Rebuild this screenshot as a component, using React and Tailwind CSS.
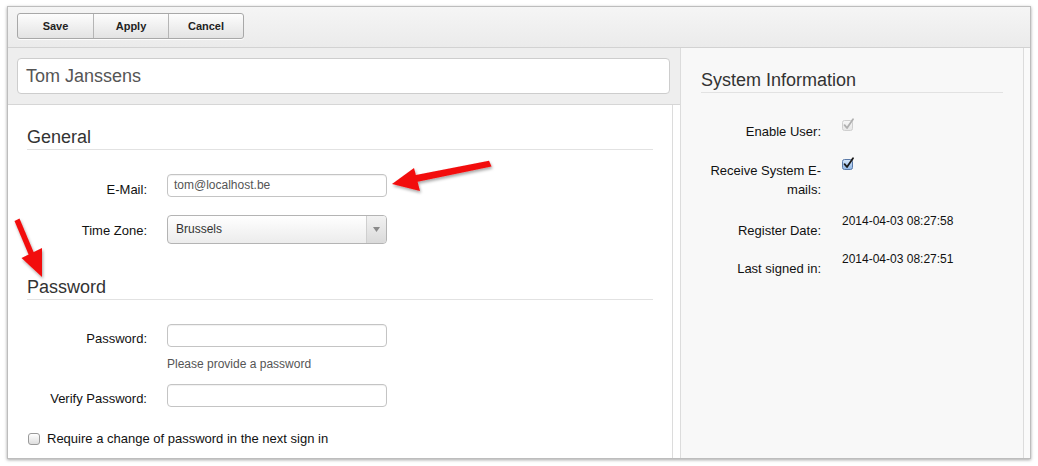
import React from "react";

const font = { fontFamily: '"Liberation Sans", Arial, sans-serif' };

function Check({ variant }) {
  const disabled = variant === "disabled";
  return (
    <svg width="14" height="14" viewBox="0 0 14 14">
      <defs>
        <linearGradient id={"cb-" + variant} x1="0" y1="0" x2="0" y2="1">
          <stop offset="0" stopColor={disabled ? "#f7f7f7" : "#d6e7fa"} />
          <stop offset="1" stopColor={disabled ? "#e6e6e6" : "#8fb6e6"} />
        </linearGradient>
      </defs>
      <rect x="1.5" y="2.5" width="10" height="10" rx="2" fill={"url(#cb-" + variant + ")"} stroke={disabled ? "#cfcfcf" : "#5a7aa8"} />
      <path d="M3.6 7.2 L6 10 L12 1.2" stroke={disabled ? "#b0b0b0" : "#1a1a1a"} strokeWidth="1.8" fill="none" strokeLinecap="round" strokeLinejoin="round" />
    </svg>
  );
}

function Field({ label, children, labelPt = "pt-[8px]" }) {
  return (
    <div className="flex">
      <div className={"w-[120px] text-right text-[13px] leading-[16px] text-[#111] " + labelPt}>{label}</div>
      <div className="ml-[20px]">{children}</div>
    </div>
  );
}

function TextInput({ value }) {
  return (
    <div className="w-[220px] h-[23px] border border-[#c4c4c4] rounded-[4px] bg-white shadow-[inset_0_1px_1px_rgba(0,0,0,0.06)] pl-[6px] text-[12px] leading-[21px] text-[#555]">
      {value}
    </div>
  );
}

function Arrows() {
  return (
    <svg className="absolute left-0 top-0 pointer-events-none" width="1038" height="466">
      <defs>
        <filter id="sh" x="-20%" y="-20%" width="140%" height="140%">
          <feDropShadow dx="1" dy="2" stdDeviation="1.5" floodColor="#000" floodOpacity="0.35" />
        </filter>
      </defs>
      <g filter="url(#sh)" fill="#f20f0f">
        <polygon points="414.5,175.3 489,160.8 491.5,166.4 416.5,182" />
        <polygon points="392,184 414,168 420,191" />
        <polygon points="14.5,221 19.5,218.5 34,253 29,255.5" />
        <polygon points="42,277 21.5,258 42,248" />
      </g>
    </svg>
  );
}

export default function App() {
  return (
    <div className="relative w-[1038px] h-[466px] bg-white pl-[7px] pt-[6px] overflow-hidden" style={font}>
      <div className="w-[1024px] h-[453px] border border-[#bdbdbd] shadow-[0_1px_3px_rgba(0,0,0,0.35)] flex flex-col bg-white">
        {/* toolbar */}
        <div className="h-[41px] shrink-0 border-b border-[#d2d2d2] bg-gradient-to-b from-[#f5f5f5] to-[#ebebeb] pl-[9px] pt-[6px]">
          <div className="inline-flex h-[26px] border border-[#a8a8a8] rounded-[3px] overflow-hidden bg-gradient-to-b from-[#fdfdfd] to-[#e3e3e3] shadow-[0_1px_0_rgba(255,255,255,0.8)]">
            {["Save", "Apply", "Cancel"].map((b, i) => (
              <div
                key={b}
                className={
                  "w-[75px] flex items-center justify-center text-[11px] font-bold text-[#222] " +
                  (i > 0 ? "border-l border-[#b5b5b5]" : "")
                }
              >
                {b}
              </div>
            ))}
          </div>
        </div>
        {/* body */}
        <div className="flex flex-1 min-h-0">
          {/* left column */}
          <div className="w-[672px] flex flex-col">
            <div className="h-[57px] shrink-0 bg-[#eeeeee] border-b border-[#d6d6d6] pl-[9px] pt-[10px]">
              <div className="w-[653px] h-[36px] bg-white border border-[#cdcdcd] rounded-[4px] pl-[8px] text-[18px] leading-[34px] text-[#555]">
                Tom Janssens
              </div>
            </div>
            <div className="flex flex-1">
              <div className="w-[665px] border-r border-[#dcdcdc] bg-white pl-[19px] pr-[19px]">
                <div className="pt-[20px]">
                  <h2 className="text-[18px] leading-[24px] text-[#333] border-b border-[#e2e2e2]">General</h2>
                </div>
                <div className="mt-[24px]">
                  <Field label="E-Mail:">
                    <TextInput value="tom@localhost.be" />
                  </Field>
                </div>
                <div className="mt-[17px]">
                  <Field label="Time Zone:">
                    <div className="w-[220px] h-[29px] border border-[#b4b4b4] rounded-[4px] bg-gradient-to-b from-[#ffffff] to-[#ececec] flex overflow-hidden">
                      <div className="flex-1 pl-[8px] text-[12px] leading-[27px] text-[#333]">Brussels</div>
                      <div className="w-[20px] border-l border-[#cfcfcf] bg-gradient-to-b from-[#f2f2f2] to-[#dadada] flex items-center justify-center">
                        <svg width="7" height="5" viewBox="0 0 7 5"><polygon points="0,0 7,0 3.5,5" fill="#8a8a8a" /></svg>
                      </div>
                    </div>
                  </Field>
                </div>
                <div className="mt-[31px]">
                  <h2 className="text-[18px] leading-[24px] text-[#333] border-b border-[#e2e2e2]">Password</h2>
                </div>
                <div className="mt-[24px]">
                  <Field label="Password:" labelPt="pt-[7px]">
                    <TextInput value="" />
                  </Field>
                </div>
                <div className="mt-[9px] ml-[140px] text-[12px] leading-[16px] text-[#555]">Please provide a password</div>
                <div className="mt-[12px]">
                  <Field label="Verify Password:" labelPt="pt-[7px]">
                    <TextInput value="" />
                  </Field>
                </div>
                <div className="mt-[24px] flex items-center ml-[1px]">
                  <div className="w-[12px] h-[12px] rounded-[3px] border border-[#9a9a9a] bg-gradient-to-b from-white to-[#dedede]" />
                  <span className="ml-[7px] text-[13px] leading-[16px] text-[#111]">Require a change of password in the next sign in</span>
                </div>
              </div>
              <div className="flex-1 bg-white" />
            </div>
          </div>
          {/* right column */}
          <div className="flex-1 bg-[#fafafa] flex">
            <div className="w-[344px] border-l border-r border-[#dcdcdc] bg-[#f8f8f8] pl-[20px] pr-[20px]">
              <div className="pt-[20px]">
                <h2 className="text-[18px] leading-[24px] text-[#333] border-b border-[#e2e2e2]">System Information</h2>
              </div>
              <div className="mt-[25px] flex">
                <div className="w-[120px] text-right text-[13px] leading-[19px] pt-[4px] text-[#111]">Enable User:</div>
                <div className="ml-[20px]"><Check variant="disabled" /></div>
              </div>
              <div className="mt-[16px] flex">
                <div className="w-[120px] text-right text-[13px] leading-[19px] pt-[4px] text-[#111]">Receive System E-mails:</div>
                <div className="ml-[20px]"><Check variant="checked" /></div>
              </div>
              <div className="mt-[13px] flex">
                <div className="w-[120px] text-right text-[13px] leading-[19px] pt-[9px] text-[#111]">Register Date:</div>
                <div className="ml-[21px] pt-[1px] text-[12px] leading-[16px] text-[#111]">2014-04-03 08:27:58</div>
              </div>
              <div className="mt-[10px] flex">
                <div className="w-[120px] text-right text-[13px] leading-[19px] pt-[9px] text-[#111]">Last signed in:</div>
                <div className="ml-[21px] pt-[1px] text-[12px] leading-[16px] text-[#111]">2014-04-03 08:27:51</div>
              </div>
            </div>
          </div>
        </div>
      </div>
      <Arrows />
    </div>
  );
}
